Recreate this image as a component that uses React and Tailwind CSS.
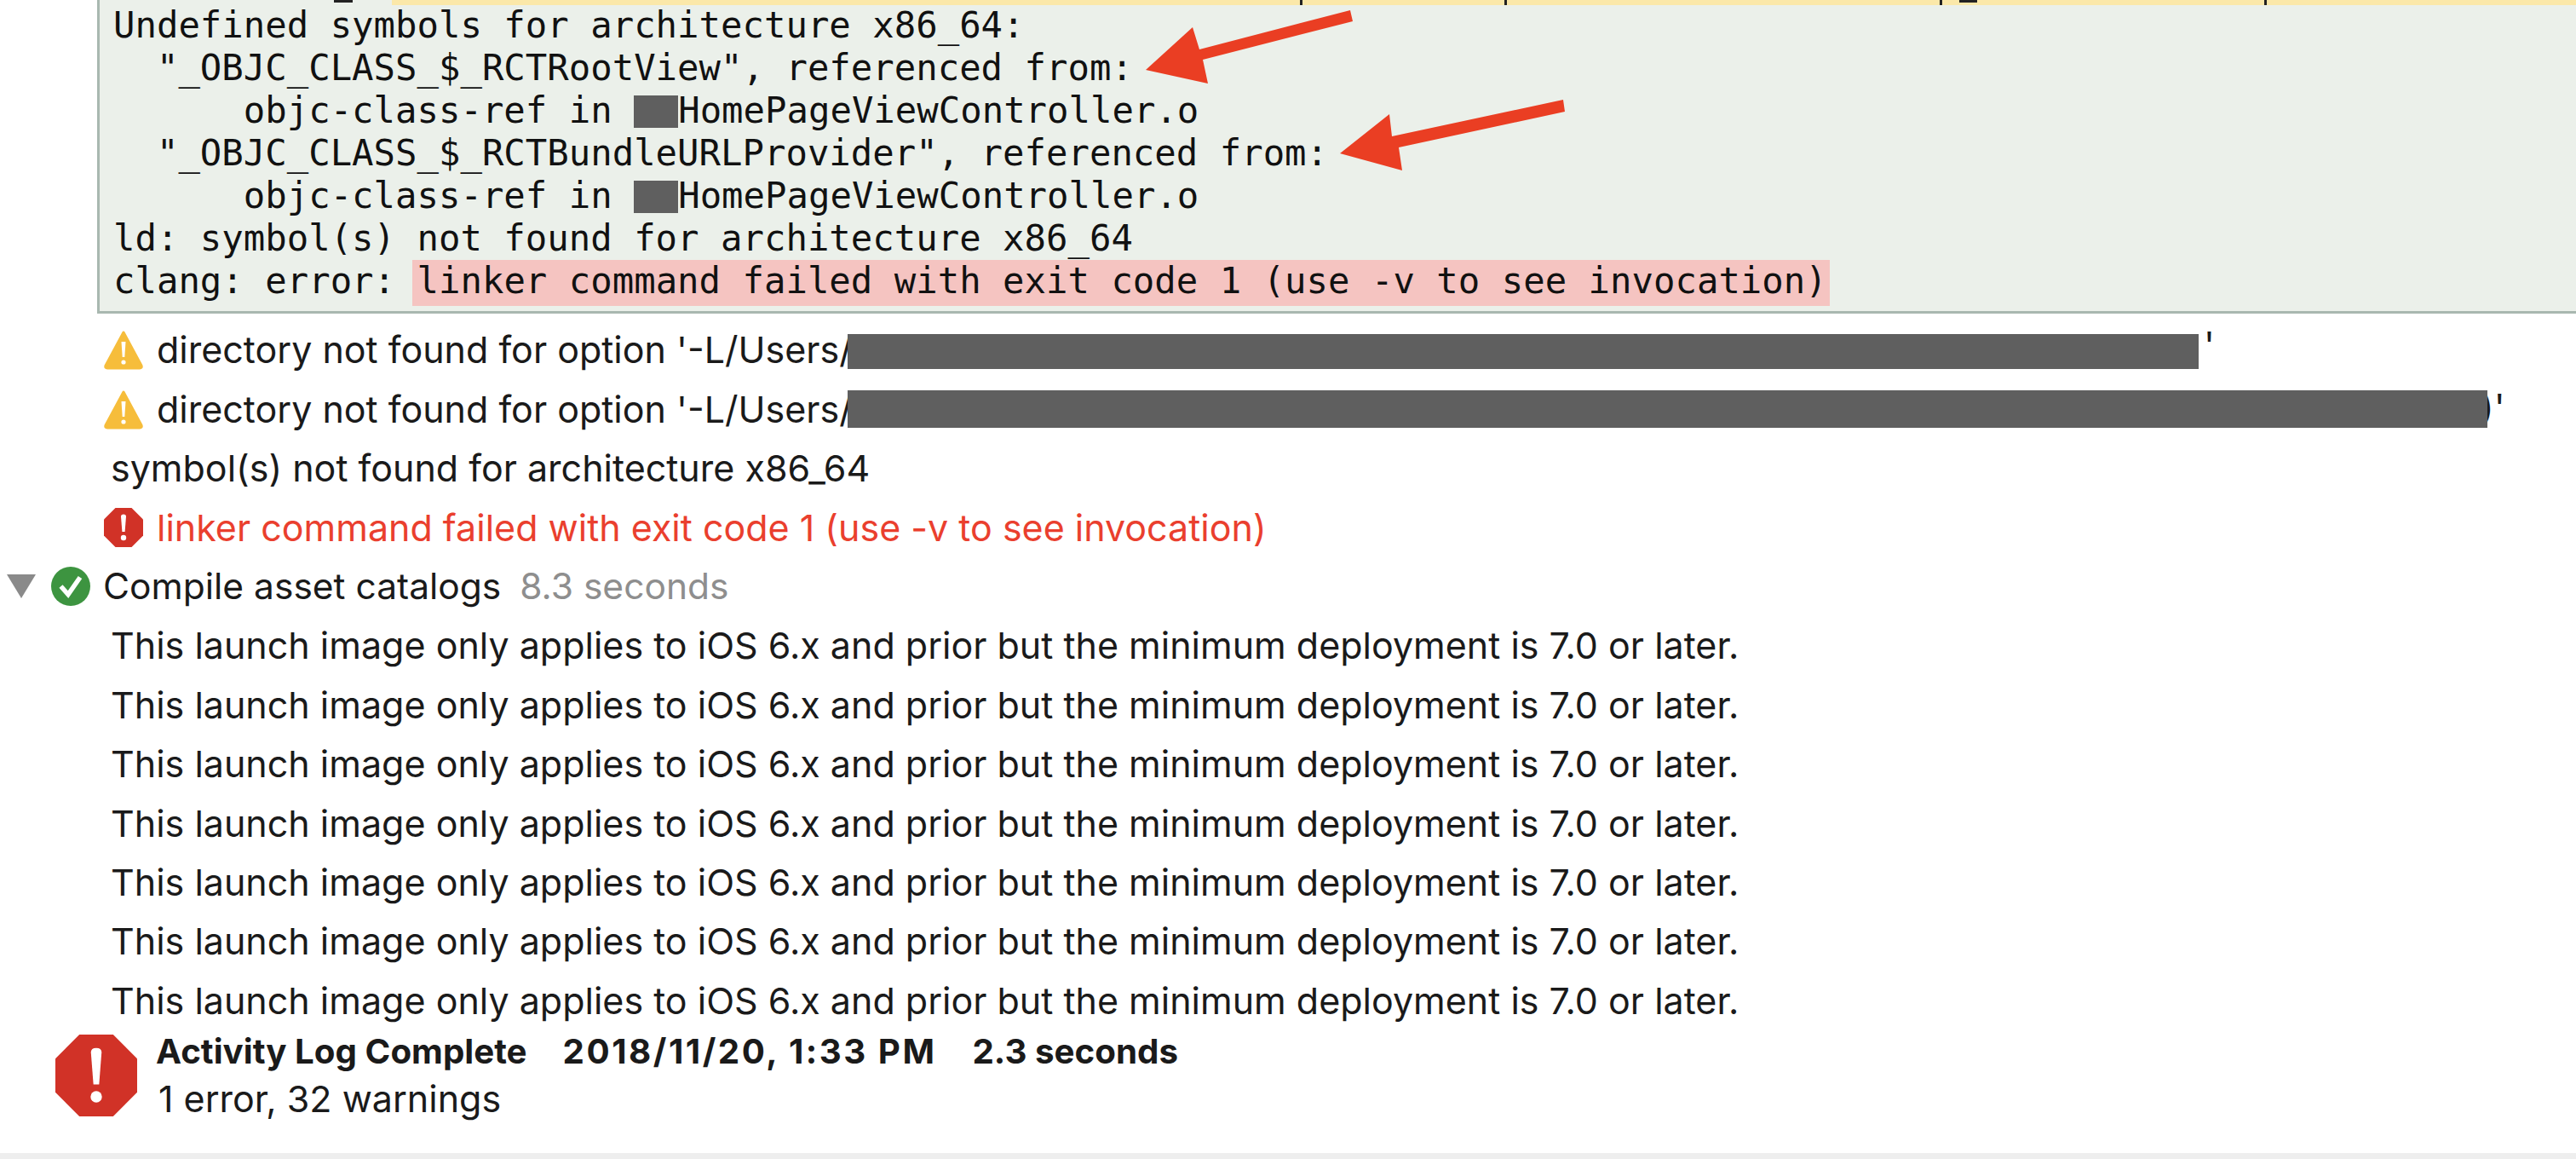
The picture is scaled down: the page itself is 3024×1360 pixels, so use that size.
import React from "react";

const LAUNCH = "This launch image only applies to iOS 6.x and prior but the minimum deployment is 7.0 or later.";

// bits of the previous log line that poke into the top of the panel
const CLIPPED_MARKS = [
  { x: 275, w: 22, h: 3 },
  { x: 1409, w: 3, h: 6 },
  { x: 1649, w: 3, h: 6 },
  { x: 2160, w: 3, h: 6 },
  { x: 2183, w: 21, h: 3 },
  { x: 2541, w: 3, h: 6 },
];

const WarningIcon = () => (
  <svg width="46" height="47" viewBox="0 0 46 47" className="shrink-0">
    <path d="M23 3 L44 42 Q45 45 42 45 L4 45 Q1 45 2 42 Z" fill="#f6bd3b" stroke="#f6bd3b" strokeWidth="3" strokeLinejoin="round" />
    <path d="M20.5 14 h5 l-1.2 18 h-2.6 Z" fill="#fff" />
    <circle cx="23" cy="38" r="2.6" fill="#fff" />
  </svg>
);

const ErrorIcon = ({ size = 46 }) => (
  <svg width={size} height={size} viewBox="0 0 46 46" className="shrink-0">
    <path d="M13.5 0 H32.5 L46 13.5 V32.5 L32.5 46 H13.5 L0 32.5 V13.5 Z" fill="#d13227" />
    <path d="M20 10 Q20 7.5 23 7.5 Q26 7.5 26 10 L24.6 28 H21.4 Z" fill="#fff" />
    <circle cx="23" cy="35" r="3.2" fill="#fff" />
  </svg>
);

const SuccessIcon = () => (
  <svg width="46" height="46" viewBox="0 0 46 46" className="shrink-0">
    <circle cx="23" cy="23" r="23" fill="#3d9440" />
    <path d="M11.5 23 L20 32.5 L34 12.5" fill="none" stroke="#fff" strokeWidth="5.5" />
  </svg>
);

const Redact = () => <span className="inline-block w-[52px] h-[38px] bg-[#5f5f5f] align-[-6px]" />;

const Arrow = ({ points }) => <polygon points={points} fill="#ea3e23" />;

const Row = ({ children, className = "" }) => (
  <div className={`h-[69.4px] flex items-center whitespace-nowrap ${className}`}>{children}</div>
);

const LogPanel = () => (
  <div className="ml-[114px] h-[368px] border-l-[3px] border-b-[3px] border-[#a9b8b0] bg-[#ebf0ea] font-['DejaVu_Sans_Mono',monospace] text-[42.3px] leading-[50px] text-[#111] whitespace-pre">
    <div className="relative h-[6px]">
      <div className="h-[6px] ml-[343px] bg-[#fbe8a9]" />
      {CLIPPED_MARKS.map((m) => (
        <span key={m.x} className="absolute top-0 bg-[#222]" style={{ left: m.x, width: m.w, height: m.h }} />
      ))}
    </div>
    <div className="pl-[16px] -mt-[1px]">
      <div>Undefined symbols for architecture x86_64:</div>
      <div>  "_OBJC_CLASS_$_RCTRootView", referenced from:</div>
      <div>      objc-class-ref in <Redact />HomePageViewController.o</div>
      <div>  "_OBJC_CLASS_$_RCTBundleURLProvider", referenced from:</div>
      <div>      objc-class-ref in <Redact />HomePageViewController.o</div>
      <div>ld: symbol(s) not found for architecture x86_64</div>
      <div>clang: error: <span className="inline-block h-[54px] bg-[#f5c4c1] pl-[6px] pr-[3px] -ml-[6px] align-top">linker command failed with exit code 1 (use -v to see invocation)</span></div>
    </div>
  </div>
);

export default function App() {
  return (
    <div className="relative w-[3024px] h-[1360px] overflow-hidden bg-white font-['Inter',sans-serif] text-[43px] text-[#1a1a1a]">
      <LogPanel />

      <div className="pt-[8px] pl-[122px]">
        <Row className="gap-[16px]">
          <WarningIcon />
          <span className="w-[811px]">directory not found for option '-L/Users/</span>
          <span className="w-[1586px] h-[41px] bg-[#5f5f5f] -ml-[16px] mt-[3px]" />
          <span className="-mt-[12px] -ml-[10px]">'</span>
        </Row>
        <Row className="gap-[16px]">
          <WarningIcon />
          <span className="w-[811px]">directory not found for option '-L/Users/</span>
          <span className="relative z-10 w-[1925px] h-[44px] bg-[#5f5f5f] -ml-[16px]" />
          <span className="-mt-[6px] -ml-[24px]">)'</span>
        </Row>
        <Row className="pl-[8px]">symbol(s) not found for architecture x86_64</Row>
        <Row className="gap-[16px] text-[#ea3f2e]">
          <ErrorIcon />
          <span>linker command failed with exit code 1 (use -v to see invocation)</span>
        </Row>
        <Row className="-ml-[114px] text-[42.5px]">
          <svg width="34" height="28" viewBox="0 0 34 28" className="shrink-0 mr-[18px]">
            <path d="M0 0 H34 L17 28 Z" fill="#8a8a8a" />
          </svg>
          <SuccessIcon />
          <span className="ml-[15px]">Compile asset catalogs</span>
          <span className="ml-[22px] text-[#8e8e8e]">8.3 seconds</span>
        </Row>
        {[0, 1, 2, 3, 4, 5, 6].map((i) => (
          <Row key={i} className="pl-[8px]">{LAUNCH}</Row>
        ))}
      </div>

      <div className="flex items-center gap-[22px] pl-[65px] -mt-[1px]">
        <ErrorIcon size={96} />
        <div className="-mt-[2px]">
          <div className="flex gap-[42px] font-bold text-[40.3px] leading-[55px]">
            <span>Activity Log Complete</span>
            <span className="tracking-[2.5px]">2018/11/20, 1:33 PM</span>
            <span>2.3 seconds</span>
          </div>
          <div className="ml-[3px] leading-[56px]">1 error, 32 warnings</div>
        </div>
      </div>

      <div className="absolute left-0 right-0 bottom-0 h-[7px] bg-[#eeeeee]" />

      <svg width="3024" height="368" className="absolute left-0 top-0 pointer-events-none">
        <Arrow points="1585,12 1588,25 1412,70 1418,98 1345,82 1400,32 1408,58" />
        <Arrow points="1835,117 1837,131 1642,173 1646,200 1573,180 1631,134 1634,160" />
      </svg>
    </div>
  );
}
